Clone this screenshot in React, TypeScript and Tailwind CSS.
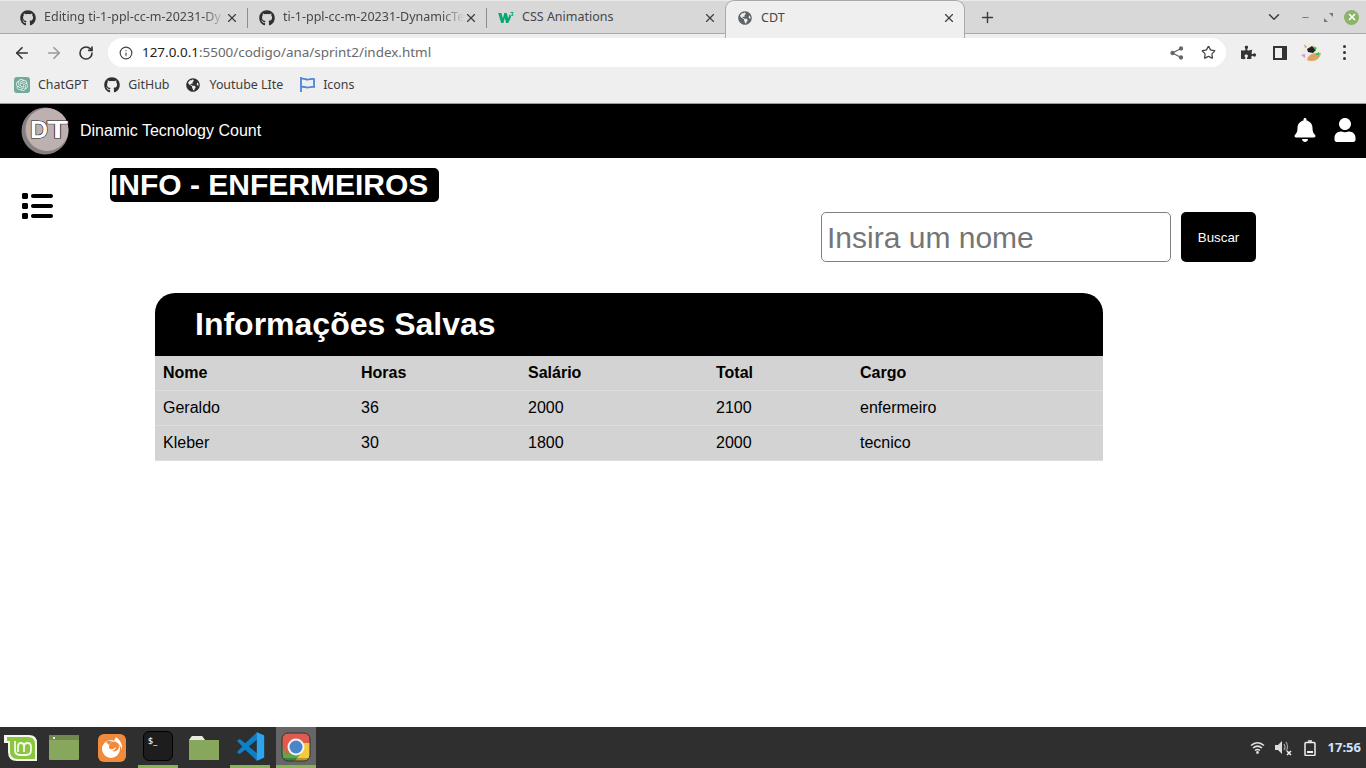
import React from "react";
import { FaGithub, FaGlobeAmericas, FaBell, FaUser, FaPuzzlePiece } from "react-icons/fa";
import { FaList } from "react-icons/fa6";
import { SiOpenai } from "react-icons/si";
import { X, Plus, ChevronDown, ArrowLeft, ArrowRight, RotateCw, Info, Star, Minus } from "lucide-react";

const ui = "font-['Noto_Sans','Open_Sans',sans-serif]";
const arial = "font-['Liberation_Sans',Arial,sans-serif]";

function W3() {
  return (
    <svg width="16" height="12" viewBox="0 0 17 13">
      <path d="M0 1h3.500l1.600 6 1.600-6h2.600l1.600 6 1.400-4.500 1.800 2.600L11 12H8.600L7.200 6.500 5.700 12H3.300z" fill="#04aa6d" />
      <path d="M13.500 0h3v1l-1 1 1 1v1h-3V3h2l-.8-.8v-.4l.8-.8h-2z" fill="#04aa6d" />
    </svg>
  );
}

function Tab({ icon, label, width, fade }: { icon: React.ReactNode; label: string; width: string; fade?: boolean }) {
  return (
    <div className={`flex h-full items-center ${width} shrink-0`}>
      <span className="w-4 h-4 flex items-center justify-center shrink-0 text-[#2f3033]">{icon}</span>
      <span className={`ml-[8px] text-[12.5px] text-[#45474a] whitespace-nowrap overflow-hidden flex-1 ${fade ? "[mask-image:linear-gradient(to_right,black_88%,transparent)]" : ""}`}>{label}</span>
      <X size={14} strokeWidth={2} className="shrink-0 text-[#3c3c3c]" />
    </div>
  );
}

function Mark({ icon, label }: { icon: React.ReactNode; label: string }) {
  return (
    <div className="flex items-center gap-2">
      <span className="w-4 h-4 flex items-center justify-center text-[#2f3033]">{icon}</span>
      <span className="text-[12.4px] pt-[1px] text-[#3c3c3c] whitespace-nowrap">{label}</span>
    </div>
  );
}

function Avatar() {
  return (
    <svg width="22" height="22" viewBox="0 0 22 22">
      <circle cx="11" cy="11" r="10" fill="#f1ebe4" />
      <path d="M7 18c1-5 6-8 14-7-1 6-7 10-14 7z" fill="#d9a468" />
      <path d="M7 7l5-3 4 4-3 3-5-1z" fill="#222" />
      <path d="M13 4l4 2-2 2zM15 13l4-3 0 3z" fill="#27c93f" />
      <path d="M1 13l4-1 0 4z" fill="#c99bd8" />
      <path d="M4 2l3 3-2 1z" fill="#b9a58c" />
    </svg>
  );
}

function Chrome() {
  return (
    <div className="h-[104px] shrink-0 flex flex-col bg-[#efefef] border-b border-[#9c9c9c]">
      <div className="h-[34px] bg-[#d8d8d8] border-t border-[#e9e9e9] border-b border-b-[#a9a9a9] flex items-stretch">
        <div className="flex items-center h-full pl-[20px] pt-[1px] w-[725px] shrink-0">
          <Tab width="w-[219px]" fade icon={<FaGithub size={16} />} label="Editing ti-1-ppl-cc-m-20231-Dy" />
          <span className="w-px h-5 bg-[#8d8d8d] ml-[8px] mr-[11px]" />
          <Tab width="w-[219px]" fade icon={<FaGithub size={16} />} label="ti-1-ppl-cc-m-20231-DynamicTe" />
          <span className="w-px h-5 bg-[#8d8d8d] ml-[8px] mr-[11px]" />
          <Tab width="w-[219px]" icon={<W3 />} label="CSS Animations" />
        </div>
        <div className="w-[240px] h-[38px] bg-[#efefef] -mt-px rounded-t-[9px] border border-b-0 border-[#a9a9a9] flex items-center pl-[11px] pr-[8px] pb-[3px] shrink-0 z-10">
          <Tab width="w-full" icon={<FaGlobeAmericas size={14} color="#5f6368" />} label="CDT" />
        </div>
        <div className="w-[44px] flex items-center justify-center shrink-0">
          <Plus size={17} strokeWidth={2} className="text-[#3c3c3c]" />
        </div>
        <div className="flex-1 flex items-center justify-end pr-[7px]">
          <ChevronDown size={18} strokeWidth={2} className="text-[#3c3c3c] mr-[18px]" />
          <Minus size={9} strokeWidth={3} className="text-[#777] mr-[14px]" />
          <svg width="9" height="9" viewBox="0 0 9 9" className="mr-[11px]">
            <path d="M5 0h4v4zM0 5l4 4H0z" fill="#777" />
          </svg>
          <span className="w-[15px] h-[15px] rounded-full bg-[#8db26a] flex items-center justify-center">
            <X size={10} strokeWidth={4} className="text-white" />
          </span>
        </div>
      </div>
      <div className="h-[33px] pt-[4px] flex items-center">
        <div className="w-[108px] flex items-center pl-[13px] shrink-0">
          <ArrowLeft size={18} strokeWidth={2.2} className="text-[#333]" />
          <ArrowRight size={18} strokeWidth={2.2} className="text-[#999] ml-[14px]" />
          <RotateCw size={16} strokeWidth={2.4} className="text-[#333] ml-[15px]" />
        </div>
        <div className="w-[1118px] h-[29px] bg-white rounded-full flex items-center pl-[11px] pr-[10px] shrink-0">
          <Info size={14} strokeWidth={2} className="text-[#444]" />
          <span className="ml-[9px] text-[13.45px] leading-none text-[#6a6a6a] whitespace-nowrap"><span className="text-[#222]">127.0.0.1</span>:5500/codigo/ana/sprint2/index.html</span>
          <span className="flex-1" />
          <svg width="14" height="14" viewBox="0 0 14 14" className="mr-[17px]" fill="#666" stroke="#666" strokeWidth="1.3">
            <circle cx="11" cy="2.5" r="1.5" /><circle cx="2.5" cy="7" r="1.5" /><circle cx="11" cy="11.5" r="1.5" />
            <path d="M11 2.5 2.5 7 11 11.5" fill="none" />
          </svg>
          <Star size={15} strokeWidth={2} className="text-[#444]" />
        </div>
        <div className="flex-1 flex items-center pl-[15px]">
          <FaPuzzlePiece size={15} color="#333" />
          <svg width="14" height="14" viewBox="0 0 14 14" className="ml-[17px]">
            <path fillRule="evenodd" d="M0 0h14v14H0zM2 2v10h7V2z" fill="#333" />
          </svg>
          <span className="ml-[13px]"><Avatar /></span>
          <span className="ml-[21px] flex flex-col gap-[3px]">
            <i className="w-[3px] h-[3px] rounded-full bg-[#333] block" />
            <i className="w-[3px] h-[3px] rounded-full bg-[#333] block" />
            <i className="w-[3px] h-[3px] rounded-full bg-[#333] block" />
          </span>
        </div>
      </div>
      <div className="flex-1 flex items-center pl-[14px] gap-4">
        <Mark label="ChatGPT" icon={
          <span className="w-4 h-4 rounded-[3px] bg-[#74aa9c] flex items-center justify-center"><SiOpenai size={12} color="#e8f3f0" /></span>
        } />
        <Mark label="GitHub" icon={<FaGithub size={16} />} />
        <Mark label="Youtube LIte" icon={<FaGlobeAmericas size={14} color="#2f3033" />} />
        <Mark label="Icons" icon={
          <svg width="15" height="15" viewBox="0 0 15 15" fill="none" stroke="#4a86d8" strokeWidth="1.8">
            <path d="M1 0v15M1 2c3-1.500 5 1 7 .5s4-1 6-.5v8c-2-.5-4 0-6 .5s-4-1.500-7-.5" />
          </svg>
        } />
      </div>
    </div>
  );
}

function Logo() {
  return (
    <svg width="50" height="50" viewBox="0 0 50 50">
      <circle cx="25" cy="25" r="23.500" fill="#85807f" />
      <circle cx="27" cy="23.500" r="21.500" fill="#bdb0b0" />
      <text x="10" y="32" fontFamily="Liberation Sans, sans-serif" fontWeight="700" fontSize="24" textLength="18" lengthAdjust="spacingAndGlyphs" fill="#fff" stroke="#222" strokeWidth="1.2" paintOrder="stroke">D</text>
      <text x="27" y="32" fontFamily="Liberation Sans, sans-serif" fontWeight="700" fontSize="24" textLength="21" lengthAdjust="spacingAndGlyphs" fill="#fff" stroke="#222" strokeWidth="1.2" paintOrder="stroke">T</text>
    </svg>
  );
}

const rows = [
  ["Geraldo", "36", "2000", "2100", "enfermeiro"],
  ["Kleber", "30", "1800", "2000", "tecnico"],
];
const heads = ["Nome", "Horas", "Salário", "Total", "Cargo"];

function Page() {
  return (
    <div className={`flex-1 min-h-0 flex flex-col bg-white ${arial}`}>
      <header className="h-[54px] bg-black flex items-center shrink-0 pl-[20px] pr-[9px]">
        <Logo />
        <span className="ml-[10px] text-white text-[16px]">Dinamic Tecnology Count</span>
        <span className="flex-1" />
        <div className="flex items-center gap-[16px] -mt-[2px]">
          <FaBell size={24} color="#fff" />
          <FaUser size={24} color="#fff" />
        </div>
      </header>
      <main className="flex-1 flex items-start">
        <div className="w-[110px] shrink-0 pl-[21px] pt-[32px]">
          <FaList size={32} color="#000" />
        </div>
        <div className="flex-1 pt-[10px]">
          <h1 className="w-fit bg-black text-white font-bold text-[30px]/[34px] h-[34px] pr-[11px] rounded-[5px] whitespace-nowrap">INFO - ENFERMEIROS</h1>
          <div className="flex justify-end gap-[10px] mt-[10px] mr-[110px]">
            <input readOnly placeholder="Insira um nome" className="w-[350px] h-[50px] border border-[#808080] rounded-[5px] px-[5px] pt-[1px] text-[30px] outline-none placeholder:text-[#757575]" />
            <button className="w-[75px] h-[50px] bg-black text-white rounded-[5px] pt-[1px] text-[13.330px]">Buscar</button>
          </div>
          <section className="ml-[45px] mt-[31px] w-[948px]">
            <h2 className="bg-black text-white font-bold text-[32px]/[63px] h-[63px] rounded-t-[20px] pl-[40px]">Informações Salvas</h2>
            <table className="w-full table-fixed border-separate border-spacing-0 bg-[#d3d3d3] text-[16px] text-black">
              <colgroup>
                <col className="w-[198px]" />
                <col className="w-[167px]" />
                <col className="w-[188px]" />
                <col className="w-[144px]" />
                <col />
              </colgroup>
              <thead>
                <tr className="h-[35px]">
                  {heads.map((h) => (
                    <th key={h} className="text-left font-bold px-[8px] py-0 border-b border-[#dedede]">{h}</th>
                  ))}
                </tr>
              </thead>
              <tbody>
                {rows.map((r) => (
                  <tr key={r[0]} className="h-[35px]">
                    {r.map((c, i) => (
                      <td key={i} className="px-[8px] py-0 border-b border-[#dedede]">{c}</td>
                    ))}
                  </tr>
                ))}
              </tbody>
            </table>
          </section>
        </div>
      </main>
    </div>
  );
}

function Taskbar() {
  const active = "border-b-[3px] border-[#8bb158]";
  return (
    <footer className={`h-[41px] shrink-0 bg-[#2f2f2f] flex items-stretch pl-[2px] ${ui}`}>
      <div className="w-[36px] flex items-center justify-center">
        <svg width="33" height="28" viewBox="0 0 33 28">
          <path d="M0 1h25q8 0 8 8v18H13q-9 0-9-9V9H0z" fill="#f4f6f0" />
          <path d="M3 3h21q7 0 7 7v15H14q-8 0-8-8V7H3z" fill="#8cc63f" />
          <path d="M11 7v9q0 5 5 5h6q5 0 5-5v-3q0-4-3.500-4T20 13v5m0-5q0-4-3-4t-3 4v5" fill="none" stroke="#f4f6f0" strokeWidth="1.800" />
        </svg>
      </div>
      <div className="w-[46px] ml-[3px] flex items-center justify-center">
        <svg width="30" height="25" viewBox="0 0 30 25">
          <rect width="30" height="25" rx="1" fill="#87a85c" />
          <rect width="30" height="5" fill="#6f8a4c" />
          <rect x="4" y="2" width="2" height="2" fill="#e6e6e6" />
        </svg>
      </div>
      <div className="w-[46px] ml-[2px] flex items-center justify-center">
        <svg width="28" height="28" viewBox="0 0 28 28">
          <rect width="28" height="28" rx="6" fill="#f08a3c" />
          <circle cx="13" cy="15" r="9" fill="#fff" />
          <circle cx="16" cy="12.500" r="5" fill="#f08a3c" />
          <path d="M18 3q7 5 6 13-2-7-8-9z" fill="#fff" />
          <path d="M8 8q3-2 6-1l-3 4z" fill="#f08a3c" />
          <path d="M10 14q4 3 8-1-1 4-5 4z" fill="#fff" />
        </svg>
      </div>
      <div className={`w-[40px] ml-[3px] flex items-start pt-[4px] justify-center ${active}`}>
        <span className="w-[30px] h-[30px] rounded-[6px] bg-[#1d1d1d] border border-black text-white text-[9px] leading-none pl-[4px] pt-[4px]">$_</span>
      </div>
      <div className="w-[46px] ml-[3px] flex items-center justify-center">
        <svg width="30" height="25" viewBox="0 0 30 25">
          <path d="M0 5 3 1h10l3 4h14v20H0z" fill="#87a85c" />
          <path d="M3 1h10l3 4H0z" fill="#e8eadf" />
        </svg>
      </div>
      <div className={`w-[40px] ml-[3px] flex items-start pt-[5px] justify-center ${active}`}>
        <svg width="29" height="29" viewBox="0 0 100 100">
          <path fillRule="evenodd" d="M72 1 97 12v76L72 99 32 61 13 76 3 70 22 50 3 30 13 24 32 39zM72 27 44 50 72 73z" fill="#0e7fc9" />
          <path fillRule="evenodd" d="M72 1 97 12v76L72 99z" fill="#2ba6ee" />
        </svg>
      </div>
      <div className={`w-[40px] ml-[6px] bg-[#666] flex items-start pt-[5px] justify-center ${active}`}>
        <svg width="30" height="30" viewBox="0 0 30 30">
          <defs><clipPath id="ch"><rect x="1" y="1" width="28" height="28" rx="6" /></clipPath></defs>
          <g clipPath="url(#ch)">
            <rect width="30" height="30" fill="#5aa848" />
            <path d="M0 0H30V11H15L6 23 0 12z" fill="#e05a4e" />
            <path d="M30 11H15L21 20 13 30H30z" fill="#f5c93d" />
            <rect y="26" width="30" height="4" fill="#000" opacity=".25" />
          </g>
          <rect x="1" y="1" width="28" height="28" rx="6" fill="none" stroke="#333" />
          <circle cx="15" cy="15" r="8.500" fill="#f2f2f2" />
          <circle cx="15" cy="15" r="6.500" fill="#4a86c8" />
        </svg>
      </div>
      <span className="flex-1" />
      <div className="flex items-center pr-[5px]">
        <svg width="15" height="12" viewBox="0 0 15 12" className="mr-[10px]" fill="none" stroke="#e2e2e2" strokeWidth="1.6">
          <path d="M1 3.500c4-3.500 9-3.500 13 0M3 6c3-2.500 6-2.500 9 0M5 8.500c1.500-1.200 3.500-1.200 5 0" />
          <circle cx="7.500" cy="10.500" r=".6" fill="#e2e2e2" />
        </svg>
        <svg width="18" height="16" viewBox="0 0 18 16" className="mr-[11px]" fill="#dcdcdc">
          <path d="M0 5h3l4-4v13l-4-4H0z" />
          <path d="M9 4q2 3 0 6M11 2q3 5 0 9" fill="none" stroke="#a5a5a5" strokeWidth="1.200" />
          <path d="M12 11l4 4m0-4-4 4" stroke="#eee" strokeWidth="1.600" />
        </svg>
        <svg width="12" height="16" viewBox="0 0 12 16" className="mr-[12px]" fill="none" stroke="#f0f0f0" strokeWidth="1.500">
          <rect x="1" y="2.500" width="10" height="13" rx="1" />
          <path d="M4 1h4" />
          <path d="M3 12h6" strokeWidth="2" />
        </svg>
        <span className="text-[13px] font-bold text-[#cfe3f7]">17:56</span>
      </div>
    </footer>
  );
}

export default function App() {
  return (
    <div className="h-screen w-full flex flex-col overflow-hidden">
      <div className={ui}>
        <Chrome />
      </div>
      <Page />
      <Taskbar />
    </div>
  );
}
